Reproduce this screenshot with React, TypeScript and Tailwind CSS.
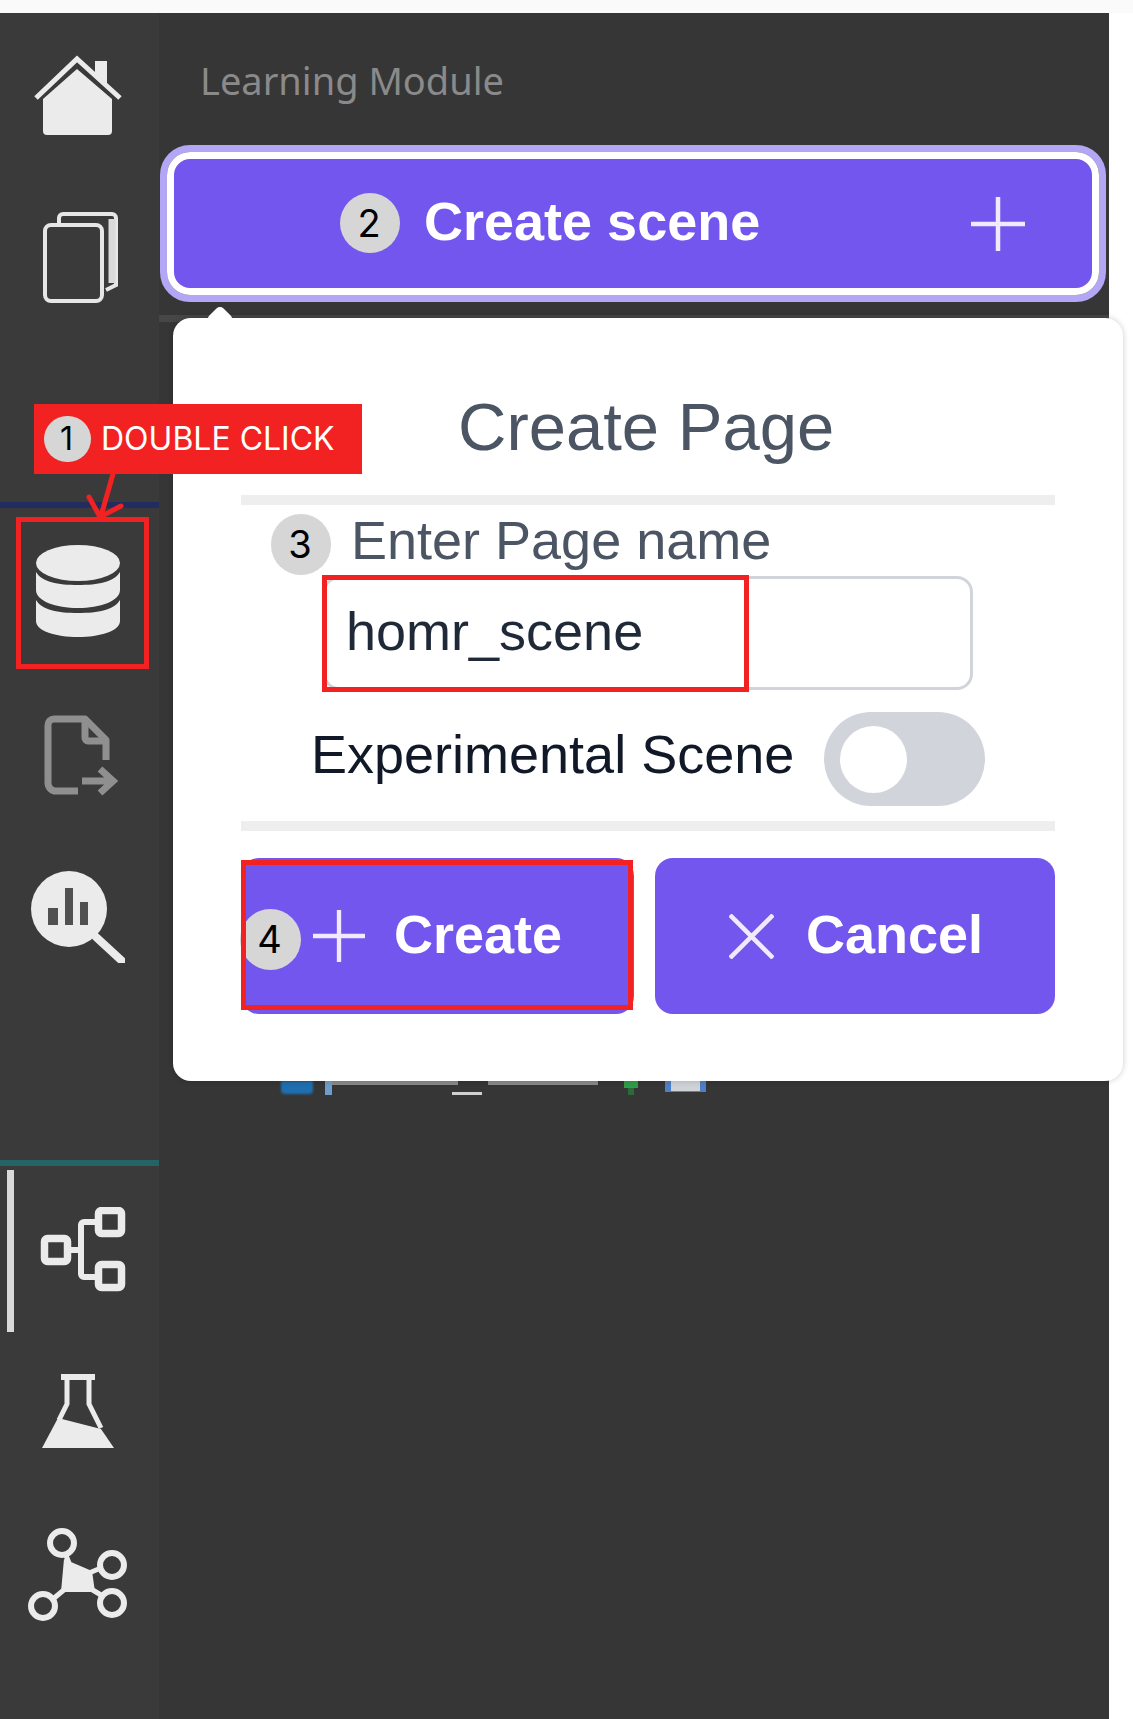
const purple = 'bg-[#7356ee]';

function Badge({ n, className }: { n: number; className: string }) {
  return (
    <div
      className={`absolute flex items-center justify-center rounded-full bg-[#d6d6d6] pr-[2px] font-['Inter',sans-serif] text-black ${className}`}
    >
      {n}
    </div>
  );
}

function RedBox({ className }: { className: string }) {
  return <div className={`absolute border-[5px] border-[#f22222] ${className}`} />;
}

function PlusIcon({ className }: { className: string }) {
  return (
    <svg viewBox="0 0 54 54" className={className} fill="none" stroke="#efeafe" strokeWidth="4.5">
      <path d="M27 0v54M0 27h54" />
    </svg>
  );
}

function SidebarIcons() {
  return (
    <>
      {/* Home */}
      <svg viewBox="0 0 88 81" className="h-[81px] w-[88px]" fill="#ebebeb">
        <path d="M9 45 43 15l35 30v32a4 4 0 0 1-4 4H13a4 4 0 0 1-4-4z" />
        <path d="M61 7h12v26l-12-12z" />
        <path d="M2 44 43 5l43 39" fill="none" stroke="#ebebeb" strokeWidth="5" />
      </svg>
      {/* Copy */}
      <svg viewBox="0 0 76 92" className="mt-[76px] ml-[4px] h-[92px] w-[76px]" fill="none" stroke="#e6e6e6" strokeWidth="4">
        <rect x="3" y="14" width="57" height="76" rx="6" />
        <path d="M17 12V7a4 4 0 0 1 4-4h49a4 4 0 0 1 4 4v67l-10 5" />
        <path d="M70 8v64" strokeWidth="7" stroke="#d9d9d9" />
      </svg>
      {/* Database */}
      <svg viewBox="0 0 88 92" className="mt-[242px] h-[92px] w-[88px]" fill="#ebebeb">
        <ellipse cx="44" cy="18" rx="42" ry="18" />
        <path d="M2 27c6 10 22 13 42 13s36-3 42-13v18c0 11-20 18-42 18S2 56 2 45z" />
        <path d="M2 55c6 10 22 13 42 13s36-3 42-13v21c0 10-20 16-42 16S2 86 2 76z" />
      </svg>
      {/* File export */}
      <svg viewBox="0 0 74 82" className="mt-[78px] ml-[7px] h-[82px] w-[74px]" fill="none" stroke="#8f8f8f" strokeWidth="7">
        <path d="M34 76H12a8 8 0 0 1-8-8V10a6 6 0 0 1 6-6h31l21 21v20" strokeLinejoin="round" />
        <path d="M41 5v18a3 3 0 0 0 3 3h18" />
        <path d="M38 66h30M56 54l13 12-13 12" />
      </svg>
      {/* Search chart */}
      <svg viewBox="0 0 95 92" className="mt-[74px] h-[92px] w-[95px]">
        <circle cx="39" cy="38" r="38" fill="#ebebeb" />
        <path d="M66 66l26 24" stroke="#ebebeb" strokeWidth="8" strokeLinecap="round" />
        <path d="M18 37h10v17H18zM35 17h8v37h-8zM50 31h8v23h-8z" fill="#505050" />
      </svg>
    </>
  );
}

function SidebarBottomIcons() {
  return (
    <>
      {/* Tree */}
      <svg viewBox="0 0 86 86" className="ml-[10px] h-[86px] w-[86px]" fill="none" stroke="#ebebeb" strokeWidth="7.5">
        <rect x="4.5" y="31.5" width="23" height="23" rx="3" />
        <rect x="58.5" y="3.5" width="23" height="23" rx="3" />
        <rect x="58.5" y="57.5" width="23" height="23" rx="3" />
        <path d="M27 43h14M58 15H44a3 3 0 0 0-3 3v49a3 3 0 0 0 3 3h14" strokeWidth="6" />
      </svg>
      {/* Flask */}
      <svg viewBox="0 0 74 75" className="mt-[81px] h-[75px] w-[74px]" fill="none" stroke="#ebebeb" strokeWidth="5">
        <path d="M20 3h34" strokeWidth="6" />
        <path d="M26 5v25l-8 16M48 5v25l12 24" />
        <path d="M17 44l43 11 13 19H1z" fill="#ebebeb" stroke="none" />
      </svg>
      {/* Hub */}
      <svg viewBox="0 0 102 94" className="mt-[78px] h-[94px] w-[102px]" fill="none" stroke="#ebebeb" strokeWidth="6">
        <circle cx="35" cy="16" r="12" />
        <circle cx="85" cy="38" r="12" />
        <circle cx="85" cy="76" r="12" />
        <circle cx="16" cy="79" r="12" />
        <path d="M37 32l28 12 3 21H34z" fill="#ebebeb" stroke="none" />
        <path d="M38 26l4 10M62 46l12-5M64 62l10 6M38 62 26 72" strokeWidth="5" />
      </svg>
    </>
  );
}

export default function App() {
  return (
    <div className="relative h-[1719px] w-[1133px] overflow-hidden bg-white font-['Liberation_Sans',sans-serif]">
      <div className="h-[13px] bg-[#fafafa]" />

      <div className="flex h-[1706px] w-[1109px] bg-[#363636]">
        {/* Sidebar */}
        <aside className="flex w-[159px] shrink-0 flex-col bg-[#3a3a3a]">
          <div className="flex flex-col items-center pt-[41px] pr-[4px]">
            <SidebarIcons />
          </div>
          <div className="mt-[197px] h-[6px] bg-[#256464]" />
          <div className="relative flex flex-col items-center pt-[41px] pr-[4px]">
            <div className="absolute top-[4px] left-[7px] h-[162px] w-[7px] bg-[#d9d9d9]" />
            <SidebarBottomIcons />
          </div>
        </aside>

        {/* Main column */}
        <main className="flex-1">
          <div className="h-[132px] pt-[42px] pl-[41px] font-['Noto_Sans',sans-serif] text-[38px] leading-[50px] text-[#8a8a8a]">
            Learning Module
          </div>
          <div className="ml-px h-[157px] w-[946px] rounded-[30px] border-[7px] border-[#b3a6f5]">
            <div className={`flex h-full items-center rounded-[23px] border-[7px] border-white pr-[67px] pl-[250px] ${purple}`}>
              <span className="mb-[6px] text-[54px] leading-none font-bold text-white">Create scene</span>
              <PlusIcon className="ml-auto h-[54px] w-[54px]" />
            </div>
          </div>
          <div className="mt-[13px] h-[7px] bg-[#474747]" />
        </main>
      </div>

      {/* Line under the top icons */}
      <div className="absolute top-[502px] left-0 h-[6px] w-[159px] bg-[#232c5f]" />

      {/* Tree row showing under the popover */}
      <div className="absolute top-[1081px] left-[281px] h-[13px] w-[32px] rounded-b-[4px] bg-[#1f6fb0] blur-[1px]" />
      <div className="absolute top-[1081px] left-[325px] h-[14px] w-[7px] bg-[#6f9ccb]" />
      <div className="absolute top-[1081px] left-[332px] h-[4px] w-[126px] bg-[#8c8a88]" />
      <div className="absolute top-[1081px] left-[488px] h-[4px] w-[110px] bg-[#8c8a88]" />
      <div className="absolute top-[1092px] left-[452px] h-[3px] w-[30px] bg-[#d0d0d0]" />
      <div className="absolute top-[1081px] left-[624px] h-[7px] w-[14px] bg-[#2f9e48]" />
      <div className="absolute top-[1088px] left-[628px] h-[7px] w-[6px] bg-[#2c6a3a]" />
      <div className="absolute top-[1081px] left-[665px] h-[11px] w-[41px] bg-[#4f7fc4]" />
      <div className="absolute top-[1081px] left-[671px] h-[10px] w-[29px] bg-[#cfd3d8]" />

      {/* Popover */}
      <div className="absolute top-[318px] left-[173px] h-[763px] w-[950px] rounded-[18px] bg-white shadow-[0_0_6px_rgba(0,0,0,0.2)]">
        <div className="absolute -top-[9px] left-[37px] h-[20px] w-[20px] rotate-45 rounded-[5px] bg-white" />
        <div className="relative flex flex-col px-[68px]">
          <h2 className="mt-[69px] h-[108px] pl-[217px] text-[67px] leading-[80px] text-[#4b5563]">Create Page</h2>
          <div className="h-[10px] bg-[#eeeeee]" />
          <div className="mt-[4px] pl-[110px] text-[54px] leading-[62px] text-[#4b5563]">Enter Page name</div>
          <div className="mt-[5px] ml-[82px] flex h-[114px] w-[650px] items-center rounded-[16px] border-[3px] border-[#d1d5db] pb-[4px] pl-[20px] text-[54px] text-[#1f2937]">
            homr_scene
          </div>
          <div className="mt-[22px] flex h-[94px] items-center pl-[70px]">
            <span className="mb-[10px] text-[54px] leading-none text-[#111827]">Experimental Scene</span>
            <div className="ml-[30px] flex h-[94px] w-[161px] items-center rounded-full bg-[#d1d5db] pl-[16px]">
              <div className="h-[67px] w-[67px] rounded-full bg-white" />
            </div>
          </div>
          <div className="mt-[15px] h-[10px] bg-[#eeeeee]" />
          <div className="mt-[27px] flex gap-[21px]">
            <button className={`flex h-[156px] w-[393px] items-center rounded-[18px] pl-[72px] ${purple}`}>
              <PlusIcon className="h-[52px] w-[52px]" />
              <span className="mb-[4px] ml-[29px] text-[54px] font-bold text-white">Create</span>
            </button>
            <button className={`flex h-[156px] w-[400px] items-center rounded-[18px] pl-[74px] ${purple}`}>
              <svg viewBox="0 0 45 45" className="h-[45px] w-[45px]" fill="none" stroke="#efeafe" strokeWidth="4.5">
                <path d="M1 1l43 43M44 1 1 44" />
              </svg>
              <span className="mb-[4px] ml-[32px] text-[54px] font-bold text-white">Cancel</span>
            </button>
          </div>
        </div>
      </div>

      {/* Annotations */}
      <div className="absolute top-[404px] left-[34px] flex h-[70px] w-[328px] items-center bg-[#f22222] pl-[67px] font-['Inter',sans-serif] text-[32px] text-white">
        DOUBLE CLICK
      </div>
      <svg viewBox="0 0 60 50" className="absolute top-[472px] left-[80px] h-[50px] w-[60px]" fill="none" stroke="#f22222" strokeWidth="5" strokeLinecap="round">
        <path d="M33 2 21 44M9 25l11 20 21-11" />
      </svg>
      <RedBox className="top-[517px] left-[16px] h-[152px] w-[133px]" />
      <RedBox className="top-[575px] left-[322px] h-[117px] w-[427px]" />

      <Badge n={1} className="top-[416px] left-[44px] h-[46px] w-[47px] text-[32px]" />
      <Badge n={2} className="top-[193px] left-[340px] h-[60px] w-[60px] text-[38px]" />
      <Badge n={3} className="top-[514px] left-[271px] h-[61px] w-[60px] text-[38px]" />
      <Badge n={4} className="top-[909px] left-[240px] h-[61px] w-[61px] text-[38px]" />
      <RedBox className="top-[860px] left-[241px] h-[150px] w-[392px]" />
    </div>
  );
}
